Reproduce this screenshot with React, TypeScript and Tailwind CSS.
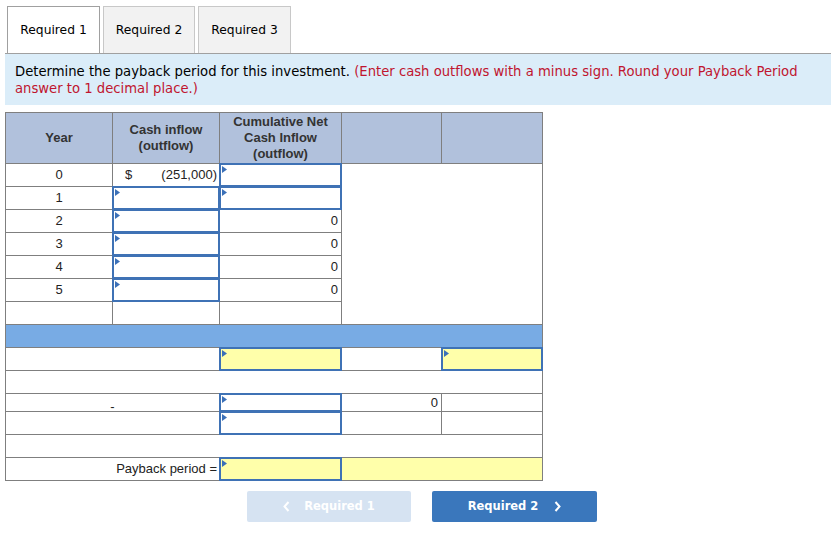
import React from "react";

const B = "border border-[#7f7f7f]";

function Flag() {
  return (
    <svg
      className="absolute left-[1px] top-[1px]"
      width="5"
      height="7"
      viewBox="0 0 5 7"
    >
      <polygon points="0,0 5,3.5 0,7" fill="#3b70b8" />
    </svg>
  );
}

function Inp({ yellow = false, h = 24 }: { yellow?: boolean; h?: number }) {
  return (
    <div
      className={`relative -m-px w-[calc(100%+2px)] border-2 border-[#3f72b5] ${
        yellow ? "bg-[#ffffaa]" : "bg-white"
      } ${h === 24 ? "h-[24px]" : "h-[19px]"}`}
    >
      <Flag />
    </div>
  );
}

export default function App() {
  const font = { fontFamily: '"Liberation Sans", Arial, sans-serif' };
  const rows = [0, 1, 2, 3, 4, 5];
  return (
    <div className="w-[831px] h-[536px] bg-white" style={{ fontFamily: '"DejaVu Sans", Verdana, sans-serif' }}>
      {/* tabs */}
      <div className="pl-[7px] pt-[6px] flex gap-[3px]">
        <div className="w-[93px] h-[47px] border border-b-0 border-[#a0a0a0] bg-white flex items-center justify-center text-[12.3px] text-black">
          Required 1
        </div>
        <div className="w-[92px] h-[47px] border border-b-0 border-[#c8c8c8] bg-[#f2f2f2] flex items-center justify-center text-[12.3px] text-black">
          Required 2
        </div>
        <div className="w-[93px] h-[47px] border border-b-0 border-[#c8c8c8] bg-[#f2f2f2] flex items-center justify-center text-[12.3px] text-black">
          Required 3
        </div>
      </div>
      <div className="ml-[5px] h-px bg-[#a0a0a0]" />
      {/* instructions */}
      <div className="ml-[5px] h-[51px] bg-[#dbedf9] pl-[10px] pt-[9px] text-[13.2px] leading-[17px] text-black">
        <div className="whitespace-nowrap">
          Determine the payback period for this investment.{" "}
          <span className="text-[#c0152f]">
            (Enter cash outflows with a minus sign. Round your Payback Period
          </span>
        </div>
        <div className="whitespace-nowrap text-[#c0152f]">answer to 1 decimal place.)</div>
      </div>
      {/* table */}
      <div className="ml-[5px] mt-[7px]" style={font}>
        <table className="table-fixed border-collapse w-[537px] text-[13px] text-[#222]">
          <colgroup>
            <col className="w-[107px]" />
            <col className="w-[107px]" />
            <col className="w-[122px]" />
            <col className="w-[100px]" />
            <col className="w-[101px]" />
          </colgroup>
          <tbody>
            <tr className="h-[51px] bg-[#b1c1dc]">
              <td className={`${B} p-0 text-center font-bold text-[13px] leading-[16px] text-[#333]`}>Year</td>
              <td className={`${B} p-0 text-center font-bold text-[13px] leading-[16px] text-[#333]`}>
                Cash inflow
                <br />
                (outflow)
              </td>
              <td className={`${B} p-0 text-center font-bold text-[13px] leading-[16px] text-[#333]`}>
                Cumulative Net
                <br />
                Cash Inflow
                <br />
                (outflow)
              </td>
              <td className={`${B} p-0`} />
              <td className={`${B} p-0`} />
            </tr>
            {rows.map((r) => (
              <tr key={r} className="h-[23px]">
                <td className={`${B} p-0 text-center`}>{r}</td>
                <td className={`${B} p-0`}>
                  {r === 0 ? (
                    <div className="flex justify-between pl-[12px] pr-[2px]">
                      <span>$</span>
                      <span>(251,000)</span>
                    </div>
                  ) : (
                    <Inp />
                  )}
                </td>
                <td className={`${B} p-0 ${r >= 2 ? "text-right pr-[3px]" : ""}`}>
                  {r < 2 ? <Inp /> : "0"}
                </td>
                {r === 0 && <td className={`${B} p-0`} colSpan={2} rowSpan={7} />}
              </tr>
            ))}
            <tr className="h-[23px]">
              <td className={`${B} p-0`} />
              <td className={`${B} p-0`} />
              <td className={`${B} p-0`} />
            </tr>
            <tr className="h-[23px] bg-[#78abe4]">
              <td className={`${B} p-0`} colSpan={5} />
            </tr>
            <tr className="h-[23px]">
              <td className={`${B} p-0`} colSpan={2} />
              <td className={`${B} p-0`}>
                <Inp yellow />
              </td>
              <td className={`${B} p-0`} />
              <td className={`${B} p-0`}>
                <Inp yellow />
              </td>
            </tr>
            <tr className="h-[23px]">
              <td className={`${B} p-0`} colSpan={5} />
            </tr>
            <tr className="h-[18px]">
              <td className={`${B} p-0 text-center align-bottom leading-[8px]`} colSpan={2}>
                -
              </td>
              <td className={`${B} p-0`}>
                <Inp h={19} />
              </td>
              <td className={`${B} p-0 text-right pr-[3px] leading-[14px]`}>0</td>
              <td className={`${B} p-0`} />
            </tr>
            <tr className="h-[23px]">
              <td className={`${B} p-0`} colSpan={2} />
              <td className={`${B} p-0`}>
                <Inp />
              </td>
              <td className={`${B} p-0`} />
              <td className={`${B} p-0`} />
            </tr>
            <tr className="h-[23px]">
              <td className={`${B} p-0`} colSpan={5} />
            </tr>
            <tr className="h-[23px]">
              <td className={`${B} p-0 text-right pr-[2px]`} colSpan={2}>
                Payback period =
              </td>
              <td className={`${B} p-0`}>
                <Inp yellow />
              </td>
              <td className={`${B} p-0 bg-[#ffffaa]`} colSpan={2} />
            </tr>
          </tbody>
        </table>
      </div>
      {/* buttons */}
      <div className="pl-[247px] pt-[10px] flex gap-[21px]">
        <div className="w-[164px] h-[31px] rounded-[2px] bg-[#d6e3f2] flex items-center justify-center gap-[14px] text-white font-bold text-[11.5px]">
          <svg width="7" height="11" viewBox="0 0 7 11">
            <polyline points="5.5,1 1.5,5.5 5.5,10" fill="none" stroke="#fff" strokeWidth="2" />
          </svg>
          <span>Required 1</span>
        </div>
        <div className="w-[165px] h-[31px] rounded-[2px] bg-[#3a77bc] flex items-center justify-center gap-[16px] text-white font-bold text-[11.5px]">
          <span>Required 2</span>
          <svg width="7" height="11" viewBox="0 0 7 11">
            <polyline points="1.5,1 5.5,5.5 1.5,10" fill="none" stroke="#fff" strokeWidth="2" />
          </svg>
        </div>
      </div>
    </div>
  );
}
